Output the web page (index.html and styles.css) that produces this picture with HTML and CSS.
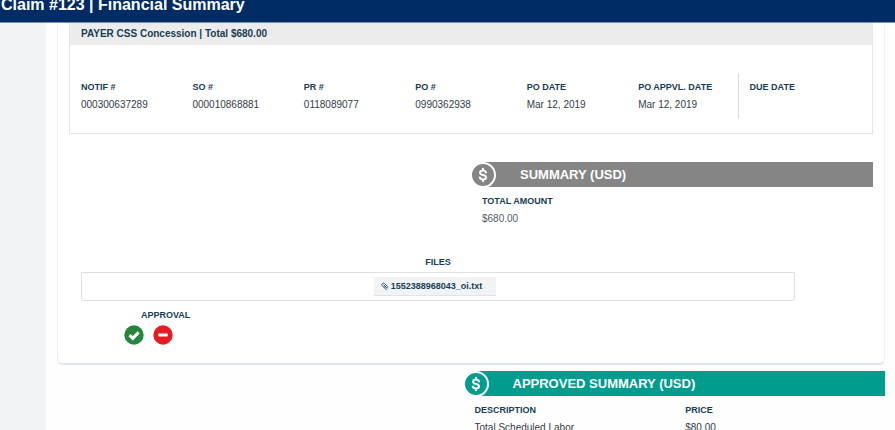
FILE: index.html
```html
<!DOCTYPE html>
<html lang="en">
<head>
<meta charset="utf-8">
<meta name="viewport" content="width=device-width, initial-scale=1">
<title>Claim #123 | Financial Summary</title>
<link rel="stylesheet" href="styles.css">
</head>
<body>
<header class="topbar"><h1>Claim #123 | Financial Summary</h1></header>
<div class="layout">
  <aside class="rail"></aside>
  <main class="main">
    <section class="card">
      <div class="payer">
        <h2 class="payer-head">PAYER CSS Concession | <span>Total $680.00</span></h2>
        <dl class="fields">
          <div><dt>NOTIF #</dt><dd>000300637289</dd></div>
          <div><dt>SO #</dt><dd>000010868881</dd></div>
          <div><dt>PR #</dt><dd>0118089077</dd></div>
          <div><dt>PO #</dt><dd>0990362938</dd></div>
          <div><dt>PO DATE</dt><dd>Mar 12, 2019</dd></div>
          <div><dt>PO APPVL. DATE</dt><dd>Mar 12, 2019</dd></div>
          <div class="due"><dt>DUE DATE</dt><dd></dd></div>
        </dl>
      </div>
      <section class="summary">
        <h2 class="bar bar-gray">
          <svg class="coin" viewBox="0 0 26 26" aria-hidden="true"><circle class="coin-disc" cx="13" cy="13" r="12"/><path class="coin-sign" d="M16 10.500C15.600 9.200 14.600 8.600 13 8.600c-1.700 0-2.900.8-2.900 2.100 0 2.900 5.900 1.600 5.900 4.500 0 1.400-1.200 2.200-3 2.200-1.700 0-2.800-.7-3.200-2M13 6.800v1.800M13 17.400v1.800"/></svg>
          <span>SUMMARY (USD)</span>
        </h2>
        <dl class="total"><dt>TOTAL AMOUNT</dt><dd>$680.00</dd></dl>
      </section>
      <section class="files">
        <h3 class="label">FILES</h3>
        <div class="file-box">
          <a class="file" href="#"><svg class="clip" viewBox="0 0 16 16" aria-hidden="true"><path d="M5 5l6.500 6.500a1.500 1.500 0 0 0 2-2L7 3a3 3 0 0 0-4.500 4.500L8.500 13.500a2.500 2.500 0 0 0 4 0M5 8l4 4"/></svg>1552388968043_oi.txt</a>
        </div>
      </section>
      <section class="approval">
        <h3 class="label">APPROVAL</h3>
        <div class="actions">
          <button type="button" aria-label="Approve"><svg viewBox="0 0 20 20"><circle class="ok" cx="10" cy="10" r="9.700"/><path class="tick" d="M5.500 10.200l3.300 3.200 5.800-6"/></svg></button>
          <button type="button" aria-label="Reject"><svg viewBox="0 0 20 20"><circle class="no" cx="10" cy="10" r="9.700"/><rect class="minus" x="5.300" y="8.400" width="9.400" height="3" rx=".6"/></svg></button>
        </div>
      </section>
    </section>
    <section class="approved">
      <h2 class="bar bar-teal">
        <svg class="coin" viewBox="0 0 26 26" aria-hidden="true"><circle class="coin-disc" cx="13" cy="13" r="12"/><path class="coin-sign" d="M16 10.500C15.600 9.200 14.600 8.600 13 8.600c-1.700 0-2.900.8-2.900 2.100 0 2.900 5.900 1.600 5.900 4.500 0 1.400-1.200 2.200-3 2.200-1.700 0-2.800-.7-3.200-2M13 6.800v1.800M13 17.400v1.800"/></svg>
        <span>APPROVED SUMMARY (USD)</span>
      </h2>
      <table>
        <thead><tr><th>DESCRIPTION</th><th>PRICE</th></tr></thead>
        <tbody><tr><td>Total Scheduled Labor</td><td>$80.00</td></tr></tbody>
      </table>
    </section>
  </main>
</div>
</body>
</html>
```
FILE: styles.css
```css
* { box-sizing: border-box; }
body {
  margin: 0;
  height: 100vh;
  overflow: hidden;
  display: flex;
  flex-direction: column;
  background: #fefefe;
  color: #343b46;
  font: 10px/17px "Liberation Sans", Arial, sans-serif;
}
h1, h2, h3, dl, dd { margin: 0; }
dt, th, .label { color: #173d55; font-size: 9px; font-weight: bold; }

.topbar {
  flex: none;
  height: 23px;
  padding-left: 1px;
  overflow: hidden;
  background: #002c65;
  border-bottom: 1px solid #7891b0;
  color: #fff;
}
.topbar h1 { font-size: 16px; line-height: 10px; }

.layout { flex: 1; min-height: 0; display: flex; }
.rail { flex: none; width: 46px; background: #f2f3f5; }
.main { flex: 1; min-width: 0; padding-right: 10px; }

.card {
  margin-left: 11px;
  padding: 0 11px 18px;
  background: #fff;
  border: 1px solid #eff1f4;
  border-top: 0;
  border-bottom: 2px solid #dfe5ec;
  border-radius: 0 0 6px 6px;
}
.payer { border: 1px solid #e6e6e6; border-top: 0; }
.payer-head {
  padding: 0 11px;
  background: #ececec;
  color: #173d55;
  font-size: 10px;
  line-height: 22px;
}
.payer-head span { font-size: 10px; }
.fields {
  display: grid;
  grid-template-columns: repeat(7, 1fr);
  padding: 28px 11px 14px;
}
.fields > div { height: 46px; padding-top: 6px; }
.fields .due { margin-left: -12px; padding-left: 11px; border-left: 1px solid #dcdcdc; }

.summary { width: 50%; margin: 28px 0 0 auto; }
.bar {
  display: flex;
  align-items: center;
  gap: 24px;
  height: 25px;
  margin-left: 12px;
  color: #fff;
  font-size: 13px;
}
.coin { flex: none; width: 26px; height: 26px; margin-left: -13px; }
.coin-disc { stroke: #fff; stroke-width: 2; }
.coin-sign { fill: none; stroke: #fff; stroke-width: 2; stroke-linecap: round; }
.bar-gray { background: #858585; }
.bar-gray .coin-disc { fill: #858585; }
.bar-teal { background: #009c8e; }
.bar-teal .coin-disc { fill: #009c8e; }
.total { padding: 6px 11px 0; }
.total dd { color: #555b65; }

.files { margin: 27px 78px 0 12px; text-align: center; }
.file-box {
  display: flex;
  justify-content: center;
  margin-top: 1px;
  padding: 4px 6px 4px 0;
  border: 1px solid #dfdfdf;
  border-radius: 0 0 3px 3px;
}
.file {
  display: flex;
  align-items: center;
  gap: 2px;
  height: 19px;
  padding: 0 14px 0 7px;
  background: #f2f3f5;
  border-bottom: 1px solid #dfe3e6;
  color: #173d55;
  font-size: 9px;
  font-weight: bold;
  text-decoration: none;
}
.clip { width: 8px; height: 8px; fill: none; stroke: #456074; stroke-width: 2; }

.approval { margin: 6px 0 0 55px; }
.approval .label { padding-left: 17px; }
.actions { display: flex; gap: 9px; margin-top: 1px; }
.actions button { width: 20px; height: 20px; padding: 0; border: 0; background: none; }
.actions svg { display: block; }
.ok { fill: #27853b; }
.no { fill: #e61c24; }
.tick { fill: none; stroke: #fff; stroke-width: 3; }
.minus { fill: #fff; }

.approved { margin: 6px 0 0 calc(50% - 2px); }
table { width: 100%; margin-top: 6px; border-collapse: collapse; table-layout: fixed; }
th, td { padding: 0 11px; text-align: left; }
```
